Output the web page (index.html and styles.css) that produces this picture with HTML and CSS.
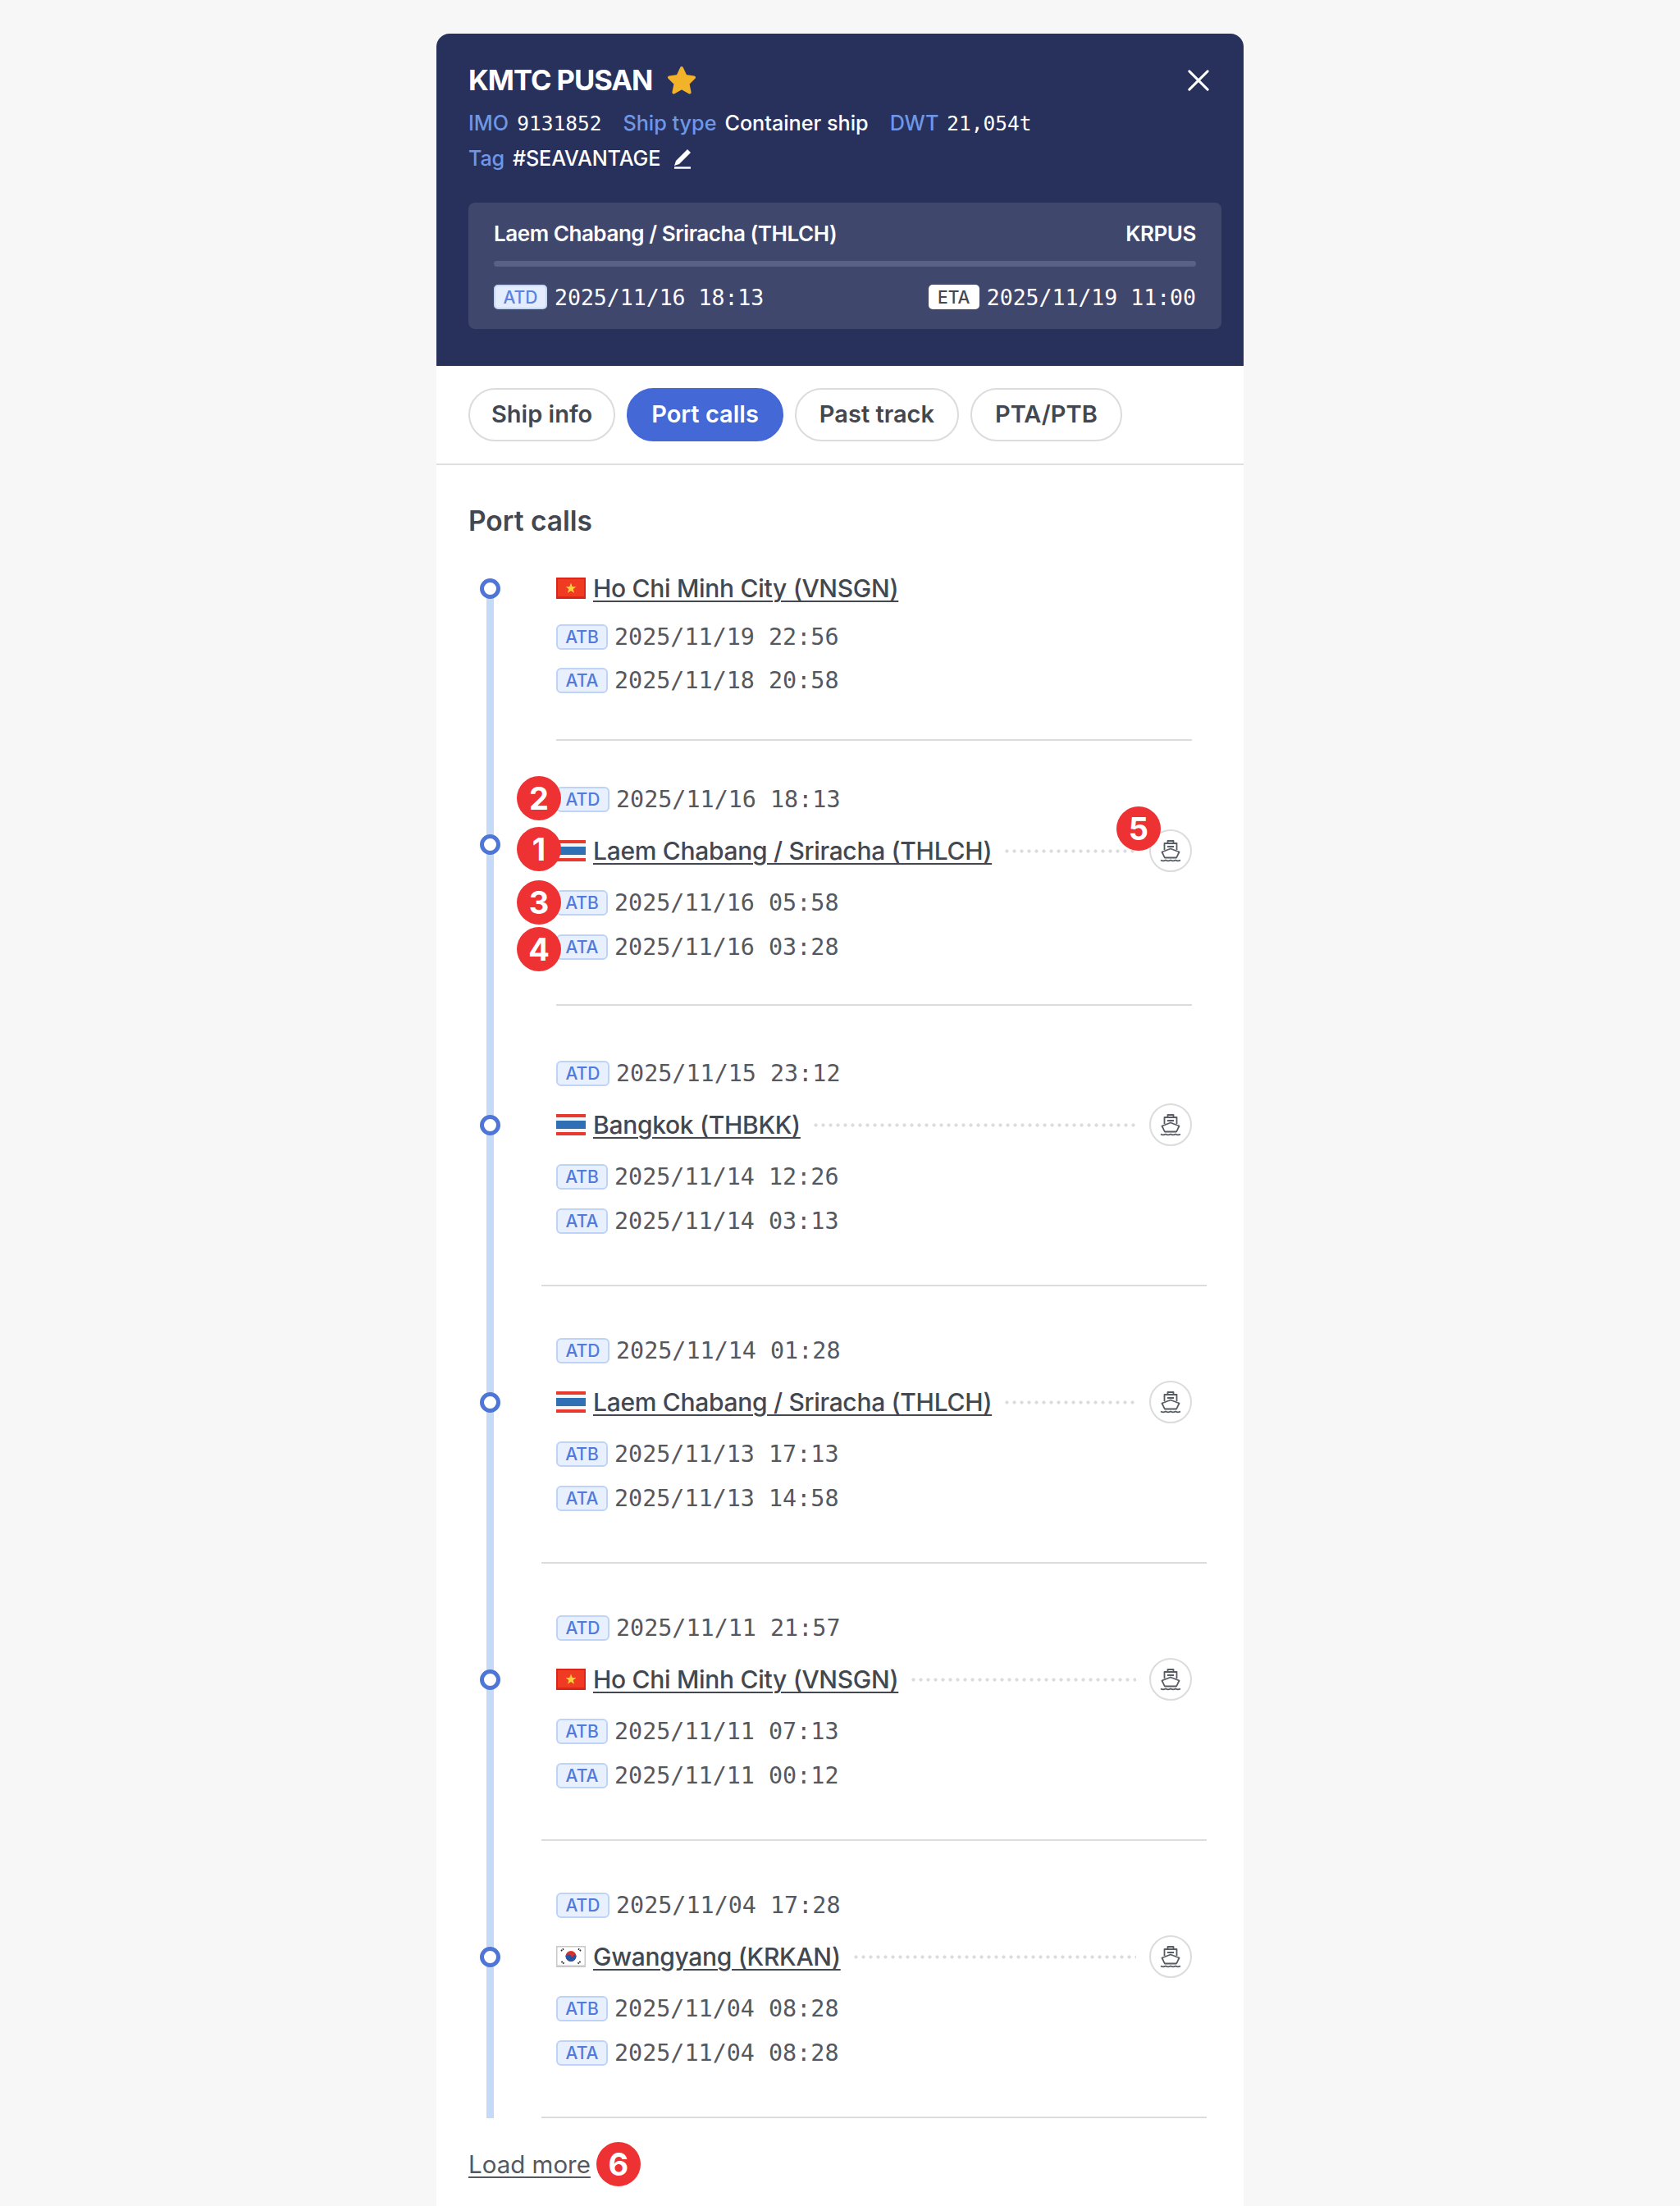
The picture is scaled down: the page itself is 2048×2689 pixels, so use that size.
FILE: index.html
```html
<!DOCTYPE html>
<html lang="en">
<head>
<meta charset="utf-8">
<title>KMTC PUSAN</title>
<link rel="stylesheet" href="styles.css">
</head>
<body>
<svg class="defs" width="0" height="0" aria-hidden="true">
  <symbol id="flag-vn" viewBox="0 0 36 26"><rect width="36" height="26" fill="#d8261c"/><rect x="2" y="2" width="32" height="21" fill="#f03a22"/><polygon points="18,6.5 19.7,11 24.5,11 20.7,14 22,18.8 18,16 14,18.8 15.3,14 11.5,11 16.3,11" fill="#fbd23a"/></symbol>
  <symbol id="flag-th" viewBox="0 0 36 26"><rect width="36" height="26" fill="#e8392f"/><rect y="4" width="36" height="4" fill="#f6f6f6"/><rect y="8" width="36" height="10" fill="#2f6fb4"/><rect y="18" width="36" height="4" fill="#f6f6f6"/></symbol>
  <symbol id="flag-kr" viewBox="0 0 36 26"><rect width="36" height="26" fill="#c9c9c9"/><rect x="1.5" y="1.5" width="33" height="22" fill="#fff"/><circle cx="18" cy="12.5" r="6.5" fill="#d9302a"/><path d="M11.5 12.5a6.5 6.5 0 0 0 13 0c0-2-3-2.5-3.4-.6-.4 1.8-2.6 1.8-3.1 0-.5-1.9-6.5-1.7-6.5.6z" fill="#2456a8"/><path d="M6 6l3-2.500M6.500 19l3 2.500M30 6l-3-2.500M29.500 19l-3 2.500" stroke="#222" stroke-width="1.800" stroke-dasharray="1.600 .8"/></symbol>
  <symbol id="ship" viewBox="0 0 28 28"><path d="M10.500 5V2h7v3M6.500 13V5h15v8M10 9h8M3.500 15.500 14 11.500l10.500 4-1.200 2.500c-.6 1.600-1.300 3-2.300 4.500H7c-1-1.500-1.700-2.900-2.300-4.500z" fill="none" stroke="#575b63" stroke-width="1.800" stroke-linejoin="round"/><path d="M2 25.500c2 1.200 4 1.200 6 0 2 1.200 4 1.200 6 0 2 1.200 4 1.200 6 0 2 1.200 4 1.200 6 0" fill="none" stroke="#575b63" stroke-width="1.700"/></symbol>
</svg>
<main class="panel">
  <header class="head">
    <div class="title-row">
      <h1 class="title">KMTC PUSAN</h1>
      <svg class="star" viewBox="0 0 24 24"><path d="M12 2.500l2.900 6.300 6.600.9-4.800 4.700 1.400 6.800-6.100-3.500-6.100 3.500 1.400-6.800-4.800-4.700 6.600-.9z" fill="#f2b32a" stroke="#f2b32a" stroke-width="2.500" stroke-linejoin="round"/></svg>
      <svg class="close" viewBox="0 0 28 28"><path d="M2 2l24 24M26 2L2 26" stroke="#fff" stroke-width="3.200" stroke-linecap="round"/></svg>
    </div>
    <div class="meta">
      <span class="meta-item"><span class="key">IMO</span><span class="mono">9131852</span></span>
      <span class="meta-item"><span class="key">Ship type</span><span>Container ship</span></span>
      <span class="meta-item"><span class="key">DWT</span><span class="mono">21,054t</span></span>
    </div>
    <div class="meta meta-tag">
      <span class="meta-item"><span class="key">Tag</span><span>#SEAVANTAGE</span></span>
      <svg class="pencil" viewBox="0 0 26 26"><path d="M19 2l4 4L9 20l-6 2 2-6z" fill="#fff"/><path d="M3 24.500h20" stroke="#fff" stroke-width="2.400"/></svg>
    </div>
    <section class="route">
      <div class="route-ports"><span>Laem Chabang / Sriracha (THLCH)</span><span>KRPUS</span></div>
      <div class="route-bar"></div>
      <div class="route-times">
        <span class="route-time"><span class="chip chip-atd">ATD</span><span class="mono">2025/11/16 18:13</span></span>
        <span class="route-time"><span class="chip chip-eta">ETA</span><span class="mono">2025/11/19 11:00</span></span>
      </div>
    </section>
  </header>
  <nav class="tabs">
    <a class="tab tab-first">Ship info</a>
    <a class="tab tab-active">Port calls</a>
    <a class="tab">Past track</a>
    <a class="tab">PTA/PTB</a>
  </nav>
  <section class="content">
    <h2 class="heading">Port calls</h2>
    <div class="calls">
      <article class="call call-first">
        <div class="port"><span class="dot"></span><svg class="flag"><use href="#flag-vn"/></svg><a class="port-name">Ho Chi Minh City (VNSGN)</a></div>
        <div class="time"><span class="badge">ATB</span><span class="stamp">2025/11/19 22:56</span></div>
        <div class="time"><span class="badge">ATA</span><span class="stamp">2025/11/18 20:58</span></div>
      </article>
      <article class="call call-second">
        <div class="time"><span class="badge badge-atd">ATD</span><span class="stamp">2025/11/16 18:13</span><span class="marker m-2">2</span></div>
        <div class="port"><span class="dot dot-high"></span><svg class="flag"><use href="#flag-th"/></svg><a class="port-name">Laem Chabang / Sriracha (THLCH)</a><span class="leader"></span><span class="ship"><svg class="ship-icon"><use href="#ship"/></svg><span class="marker m-5">5</span></span><span class="marker m-1">1</span></div>
        <div class="time"><span class="badge">ATB</span><span class="stamp">2025/11/16 05:58</span><span class="marker m-3">3</span></div>
        <div class="time"><span class="badge">ATA</span><span class="stamp">2025/11/16 03:28</span><span class="marker m-4">4</span></div>
      </article>
      <article class="call call-third">
        <div class="time"><span class="badge badge-atd">ATD</span><span class="stamp">2025/11/15 23:12</span></div>
        <div class="port"><span class="dot"></span><svg class="flag"><use href="#flag-th"/></svg><a class="port-name">Bangkok (THBKK)</a><span class="leader"></span><span class="ship"><svg class="ship-icon"><use href="#ship"/></svg></span></div>
        <div class="time"><span class="badge">ATB</span><span class="stamp">2025/11/14 12:26</span></div>
        <div class="time"><span class="badge">ATA</span><span class="stamp">2025/11/14 03:13</span></div>
      </article>
      <article class="call">
        <div class="time"><span class="badge badge-atd">ATD</span><span class="stamp">2025/11/14 01:28</span></div>
        <div class="port"><span class="dot"></span><svg class="flag"><use href="#flag-th"/></svg><a class="port-name">Laem Chabang / Sriracha (THLCH)</a><span class="leader"></span><span class="ship"><svg class="ship-icon"><use href="#ship"/></svg></span></div>
        <div class="time"><span class="badge">ATB</span><span class="stamp">2025/11/13 17:13</span></div>
        <div class="time"><span class="badge">ATA</span><span class="stamp">2025/11/13 14:58</span></div>
      </article>
      <article class="call">
        <div class="time"><span class="badge badge-atd">ATD</span><span class="stamp">2025/11/11 21:57</span></div>
        <div class="port"><span class="dot"></span><svg class="flag"><use href="#flag-vn"/></svg><a class="port-name">Ho Chi Minh City (VNSGN)</a><span class="leader"></span><span class="ship"><svg class="ship-icon"><use href="#ship"/></svg></span></div>
        <div class="time"><span class="badge">ATB</span><span class="stamp">2025/11/11 07:13</span></div>
        <div class="time"><span class="badge">ATA</span><span class="stamp">2025/11/11 00:12</span></div>
      </article>
      <article class="call">
        <div class="time"><span class="badge badge-atd">ATD</span><span class="stamp">2025/11/04 17:28</span></div>
        <div class="port"><span class="dot"></span><svg class="flag"><use href="#flag-kr"/></svg><a class="port-name">Gwangyang (KRKAN)</a><span class="leader"></span><span class="ship"><svg class="ship-icon"><use href="#ship"/></svg></span></div>
        <div class="time"><span class="badge">ATB</span><span class="stamp">2025/11/04 08:28</span></div>
        <div class="time"><span class="badge">ATA</span><span class="stamp">2025/11/04 08:28</span></div>
      </article>
    </div>
    <div class="more"><a class="more-link">Load more</a><span class="marker-inline">6</span></div>
  </section>
</main>
</body>
</html>
```
FILE: styles.css
```css
* { box-sizing: border-box; }
html, body { margin: 0; padding: 0; }
body {
  background: #f7f7f7;
  font-family: Inter, "Noto Sans", sans-serif;
  color: #43474f;
  padding-top: 41px;
}
.defs { position: absolute; }
.panel {
  width: 984px;
  height: 2648px;
  margin: 0 auto;
  background: #fff;
  border-radius: 16px 16px 0 0;
  overflow: hidden;
}
.mono, .stamp { font-family: "DejaVu Sans Mono", "Liberation Mono", monospace; }

/* header */
.head {
  height: 405px;
  background: #27315c;
  color: #fff;
  padding: 32px 27px 0 39px;
}
.title-row { display: flex; align-items: center; height: 50px; }
.title { margin: 0; font-size: 34.500px; font-weight: 700; letter-spacing: -1px; line-height: 50px; }
.star { width: 38px; height: 38px; margin-left: 17px; }
.close { width: 26px; height: 26px; margin-left: auto; margin-right: 15px; }
.meta { display: flex; align-items: center; gap: 26px; height: 30px; margin-top: 12px; font-size: 25.200px; font-weight: 500; }
.meta .mono { font-size: 24.500px; font-weight: 400; }
.meta-item { display: inline-flex; gap: 10px; align-items: baseline; }
.key { color: #6f97e6; }
.meta-tag { margin-top: 13px; gap: 14px; letter-spacing: -.15px; }
.pencil { width: 26px; height: 26px; }
.route {
  margin-top: 39px;
  height: 154px;
  width: 918px;
  background: #40476d;
  border-radius: 8px;
  padding: 22px 31px 0;
}
.route-ports { display: flex; justify-content: space-between; font-size: 26px; font-weight: 600; letter-spacing: -.45px; line-height: 32px; }
.route-bar { height: 7px; margin-top: 17px; background: #5a6186; border-radius: 4px; }
.route-times { display: flex; justify-content: space-between; align-items: center; margin-top: 21px; height: 32px; }
.route-time { display: inline-flex; align-items: center; gap: 9px; font-size: 26.500px; }
.chip { display: inline-flex; align-items: center; justify-content: center; height: 30px; border-radius: 5px; font-size: 21px; font-weight: 500; padding: 0 8px; }
.chip-atd { background: #e4edfd; color: #5b82dc; border: 2px solid #c3d7f8; width: 65px; }
.chip-eta { background: #fff; color: #43474f; width: 62px; }

/* tabs */
.tabs {
  display: flex;
  gap: 14px;
  height: 121px;
  padding: 27px 39px 0;
  border-bottom: 2px solid #dfdfdf;
}
.tab {
  height: 65px;
  display: flex;
  align-items: center;
  padding: 0 28px 2px;
  border: 2px solid #dcdcdc;
  border-radius: 33px;
  font-size: 29px;
  font-weight: 600;
  color: #43474f;
}
.tab-first { padding: 0 26px 2px; }
.tab-active { background: #4468d6; border-color: #4468d6; color: #fff; }

/* content */
.content { padding: 0 0 0 39px; }
.heading { margin: 0; height: 46px; margin-top: 45px; font-size: 33.500px; line-height: 46px; font-weight: 600; color: #43474f; }
.calls { position: relative; margin-top: 1px; width: 900px; padding-top: 27px; }
.calls::before {
  content: "";
  position: absolute;
  left: 22px;
  top: 55px;
  bottom: 0;
  width: 9px;
  background: #c5d9f8;
}
.call {
  position: relative;
  margin-left: 89px;
  padding: 51px 18px 51px;
  border-bottom: 2px solid #dcdcdc;
  width: 811px;
}
.call-first {
  margin-left: 107px;
  width: 775px;
  padding: 0 0 45px;
}
.call-first .port { height: 62px; margin-bottom: 2px; }
.call-first .time { height: 53px; }
.call-second {
  margin-left: 107px;
  width: 775px;
  padding: 44px 0 43px;
}
.call-third { padding-top: 55px; }
.port { position: relative; display: flex; align-items: center; height: 72px; }
.flag { width: 36px; height: 26px; flex: none; margin-right: 9px; }
.port-name {
  font-size: 30px;
  font-weight: 500;
  letter-spacing: -.3px;
  color: #43474f;
  text-decoration: underline;
  text-decoration-thickness: 2px;
  text-underline-offset: 4px;
  white-space: nowrap;
}
.leader {
  flex: 1;
  height: 5px;
  margin: 0 16px 0 14px;
  background: radial-gradient(circle at center, #dcdcdc 1.800px, transparent 2.400px) 0 0 / 9px 5px repeat-x;
}
.ship { position: relative; flex: none; width: 52px; height: 52px; border: 2px solid #dcdcdc; border-radius: 50%; display: flex; align-items: center; justify-content: center; }
.ship-icon { width: 28px; height: 28px; }
.dot {
  position: absolute;
  left: -93px;
  top: 50%;
  width: 25px;
  height: 25px;
  margin-top: -12px;
  background: #fff;
  border: 5px solid #4e76d8;
  border-radius: 50%;
  z-index: 1;
}
.dot-high { margin-top: -20px; }
.time { position: relative; display: flex; align-items: center; height: 54px; }
.badge {
  display: inline-flex;
  align-items: center;
  justify-content: center;
  width: 63px;
  height: 31px;
  margin-right: 8px;
  background: #e8f0fd;
  border: 2px solid #bdd3f8;
  border-radius: 6px;
  color: #527ada;
  font-size: 21px;
  font-weight: 500;
}
.badge-atd { width: 65px; }
.stamp { font-size: 28.400px; color: #55585e; white-space: nowrap; }
.marker, .marker-inline {
  display: flex;
  align-items: center;
  justify-content: center;
  width: 54px;
  height: 54px;
  border-radius: 50%;
  background: #ee3234;
  color: #fff;
  font-size: 38px;
  font-weight: 700;
  flex: none;
}
.marker { position: absolute; left: -48px; top: 50%; margin-top: -27px; z-index: 2; }
.m-1 { margin-top: -29px; }
.m-2 { margin-top: -28px; }
.m-3 { margin-top: -27px; }
.m-4 { margin-top: -24px; }
.m-5 { left: -42px; top: -30px; margin-top: 0; }
.more { display: flex; align-items: center; gap: 7px; margin-top: 29px; height: 54px; }
.more-link { font-size: 29.500px; color: #55585e; text-decoration: underline; text-decoration-thickness: 2px; text-underline-offset: 4px; }
```
